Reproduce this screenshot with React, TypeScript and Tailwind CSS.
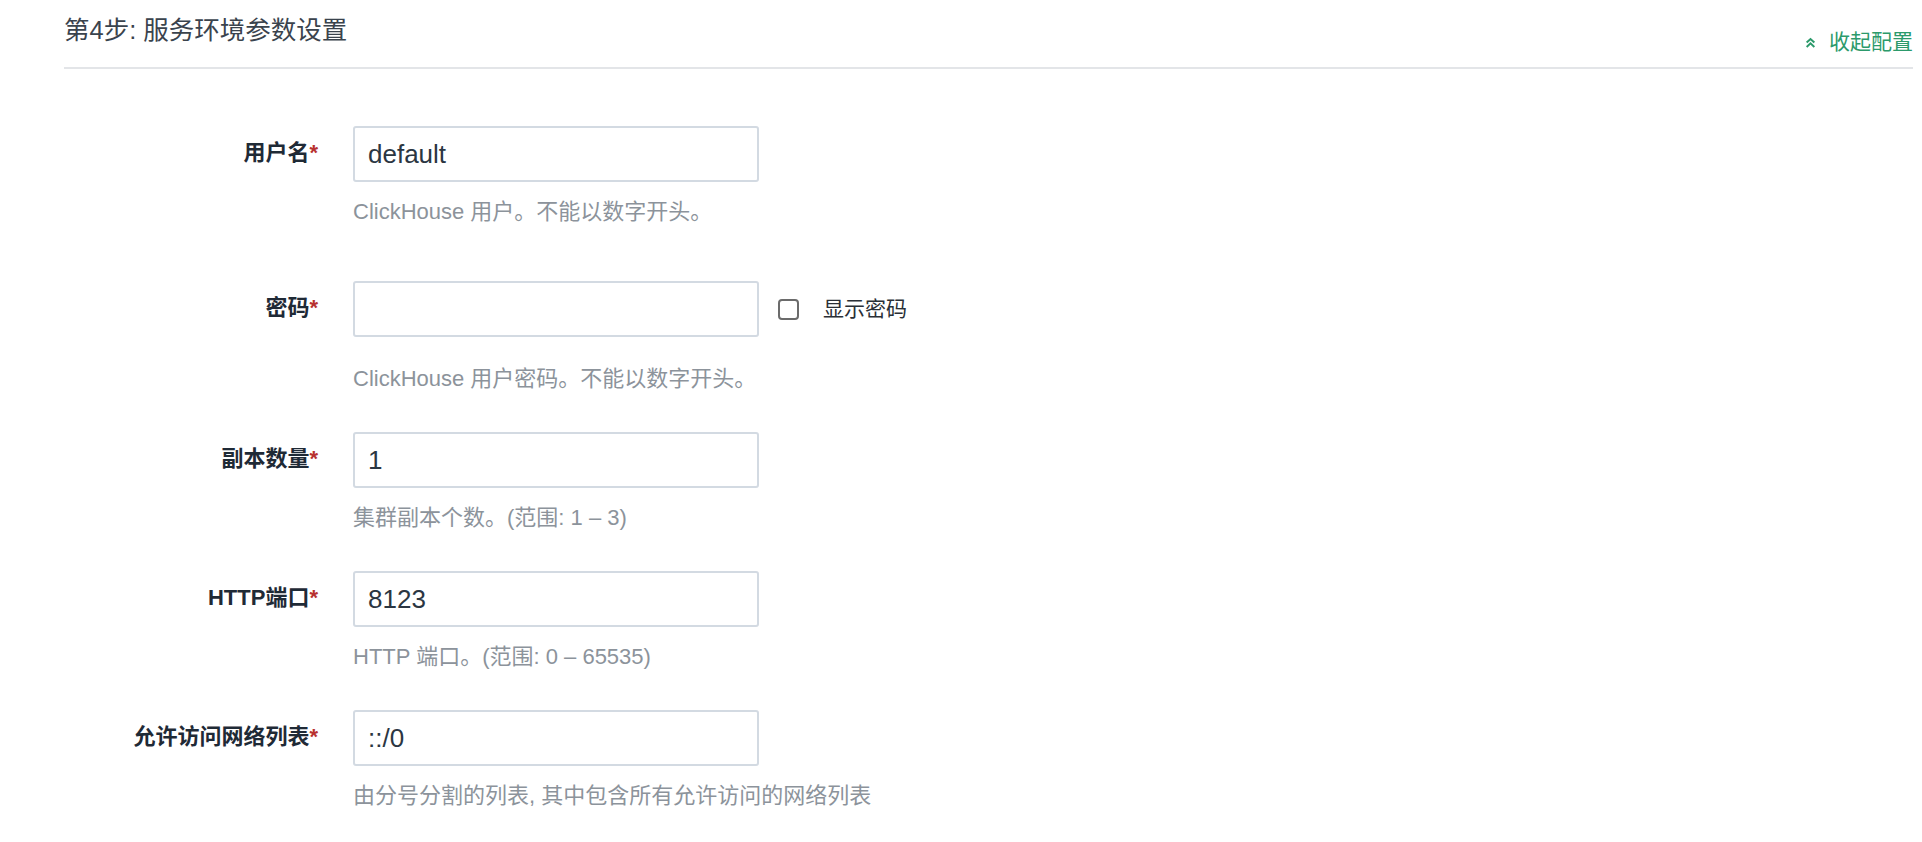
import { useState } from "react";

const FONT = "font-['Liberation_Sans','Noto_Sans_CJK_SC',sans-serif]";

type Field = {
  label: string;
  value: string;
  help: string;
  password?: boolean;
};

const FIELDS: Field[] = [
  { label: "用户名", value: "default", help: "ClickHouse 用户。不能以数字开头。" },
  { label: "密码", value: "", help: "ClickHouse 用户密码。不能以数字开头。", password: true },
  { label: "副本数量", value: "1", help: "集群副本个数。(范围: 1 – 3)" },
  { label: "HTTP端口", value: "8123", help: "HTTP 端口。(范围: 0 – 65535)" },
  { label: "允许访问网络列表", value: "::/0", help: "由分号分割的列表, 其中包含所有允许访问的网络列表" },
];

function ChevronsUp() {
  return (
    <svg width="11" height="11" viewBox="0 0 10 10" fill="none" stroke="currentColor" strokeWidth="1.8">
      <path d="M1.5 5 L5 1.8 L8.5 5" />
      <path d="M1.5 9 L5 5.8 L8.5 9" />
    </svg>
  );
}

// 行ごとの上マージン
const ROW_MT = ["mt-[57px]", "mt-[54px]", "mt-[38px]", "mt-[38px]", "mt-[38px]"];

function Row({ f, idx }: { f: Field; idx: number }) {
  const [show, setShow] = useState(false);
  return (
    <div className={`flex ${ROW_MT[idx]}`}>
      <div className="w-[289px] shrink-0 pr-[35px] pt-[12px] text-right text-[22px] font-bold leading-[30px] text-[#1f2a36]">
        {f.label}
        <span className="text-[#b8312f]">*</span>
      </div>
      <div className="flex flex-col">
        <div className="flex items-center">
          <input
            type={f.password && !show ? "password" : "text"}
            defaultValue={f.value}
            className="h-[56px] w-[406px] rounded-[3px] border-2 border-[#d3dae2] bg-white px-[13px] text-[26px] text-[#2b3642] outline-none"
          />
          {f.password && (
            <label className="ml-[19px] flex cursor-pointer items-center">
              <span
                onClick={() => setShow(!show)}
                className="h-[21px] w-[21px] rounded-[4px] border-2 border-[#6b6b6b] bg-white"
              />
              <span className="ml-[24px] text-[21px] leading-[30px] text-[#2a2f36]">显示密码</span>
            </label>
          )}
        </div>
        <div
          className={`${f.password ? "mt-[27px]" : "mt-[15px]"} text-[22px] leading-[30px] text-[#8c939b]`}
        >
          {f.help}
        </div>
      </div>
    </div>
  );
}

export default function App() {
  return (
    <div className={`min-h-screen bg-white pl-[64px] pr-[9px] ${FONT}`}>
      <div className="flex h-[69px] items-start justify-between border-b-2 border-[#e3e5e8]">
        <h2 className="mt-[12px] text-[25.5px] font-normal leading-[36px] text-[#3a434d]">
          第4步: 服务环境参数设置
        </h2>
        <button className="mt-[27px] flex items-center text-[21px] leading-[30px] text-[#2c9a6b]">
          <ChevronsUp />
          <span className="ml-[13px]">收起配置</span>
        </button>
      </div>
      {FIELDS.map((f, i) => (
        <Row key={f.label} f={f} idx={i} />
      ))}
    </div>
  );
}
